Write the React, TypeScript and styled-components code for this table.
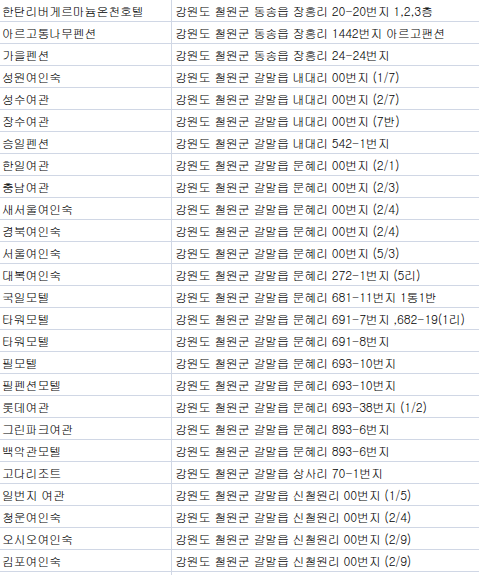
import { Fragment } from 'react';
import styled, { createGlobalStyle } from 'styled-components';

const GlobalStyle = createGlobalStyle`
  html, body {
    margin: 0;
    padding: 0;
    background: #fff;
  }
  body {
    font-family: Gulim, "Noto Sans CJK KR", "Noto Sans", sans-serif;
    font-size: 12px;
    color: #000;
  }
`;

const lodgings: [string, string][] = [
  ['한탄리버게르마늄온천호텔', '강원도 철원군 동송읍 장흥리 20-20번지 1,2,3층'],
  ['아르고통나무펜션', '강원도 철원군 동송읍 장흥리 1442번지 아르고팬션'],
  ['가을펜션', '강원도 철원군 동송읍 장흥리 24-24번지'],
  ['성원여인숙', '강원도 철원군 갈말읍 내대리 00번지 (1/7)'],
  ['성수여관', '강원도 철원군 갈말읍 내대리 00번지 (2/7)'],
  ['장수여관', '강원도 철원군 갈말읍 내대리 00번지 (7반)'],
  ['승일펜션', '강원도 철원군 갈말읍 내대리 542-1번지'],
  ['한일여관', '강원도 철원군 갈말읍 문혜리 00번지 (2/1)'],
  ['충남여관', '강원도 철원군 갈말읍 문혜리 00번지 (2/3)'],
  ['새서울여인숙', '강원도 철원군 갈말읍 문혜리 00번지 (2/4)'],
  ['경북여인숙', '강원도 철원군 갈말읍 문혜리 00번지 (2/4)'],
  ['서울여인숙', '강원도 철원군 갈말읍 문혜리 00번지 (5/3)'],
  ['대복여인숙', '강원도 철원군 갈말읍 문혜리 272-1번지 (5리)'],
  ['국일모텔', '강원도 철원군 갈말읍 문혜리 681-11번지 1통1반'],
  ['타워모텔', '강원도 철원군 갈말읍 문혜리 691-7번지 ,682-19(1리)'],
  ['타워모텔', '강원도 철원군 갈말읍 문혜리 691-8번지'],
  ['필모텔', '강원도 철원군 갈말읍 문혜리 693-10번지'],
  ['필펜션모텔', '강원도 철원군 갈말읍 문혜리 693-10번지'],
  ['롯데여관', '강원도 철원군 갈말읍 문혜리 693-38번지 (1/2)'],
  ['그린파크여관', '강원도 철원군 갈말읍 문혜리 893-6번지'],
  ['백악관모텔', '강원도 철원군 갈말읍 문혜리 893-6번지'],
  ['고다리조트', '강원도 철원군 갈말읍 상사리 70-1번지'],
  ['일번지 여관', '강원도 철원군 갈말읍 신철원리 00번지 (1/5)'],
  ['청운여인숙', '강원도 철원군 갈말읍 신철원리 00번지 (2/4)'],
  ['오시오여인숙', '강원도 철원군 갈말읍 신철원리 00번지 (2/9)'],
  ['김포여인숙', '강원도 철원군 갈말읍 신철원리 00번지 (2/9)'],
];

const Sheet = styled.div`
  width: 479px;
  height: 575px;
  overflow: hidden;
  display: grid;
  grid-template-columns: 172px 1fr;
  grid-auto-rows: 22px;
`;

const Cell = styled.div<{ $first?: boolean }>`
  box-sizing: border-box;
  border-bottom: 1px solid #d0d7e5;
  border-right: ${(p) => (p.$first ? '1px solid #d0d7e5' : 'none')};
  padding-left: ${(p) => (p.$first ? '2px' : '3px')};
  line-height: 21px;
  letter-spacing: -0.2px;
  white-space: nowrap;
  overflow: hidden;
`;

export default function App() {
  return (
    <>
      <GlobalStyle />
      <Sheet>
        {lodgings.map(([name, addr], i) => (
          <Fragment key={i}>
            <Cell $first>{name}</Cell>
            <Cell>{addr}</Cell>
          </Fragment>
        ))}
        <Cell $first />
        <Cell />
      </Sheet>
    </>
  );
}
